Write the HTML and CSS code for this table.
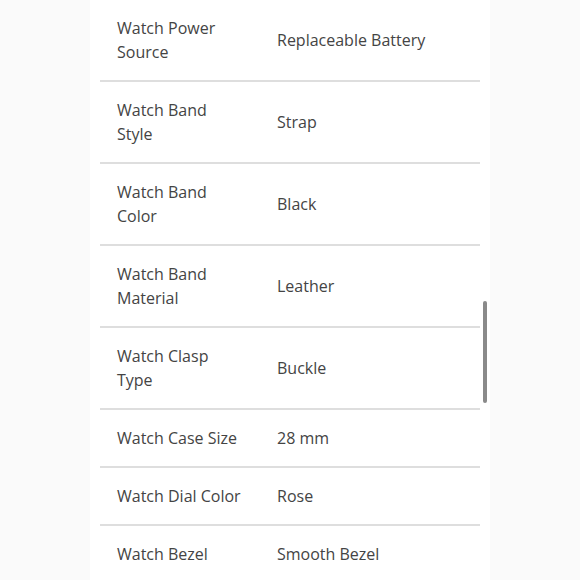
FILE: index.html
```html
<!DOCTYPE html>
<html>
<head>
<meta charset="utf-8">
<link rel="stylesheet" href="styles.css">
</head>
<body>
<div class="panel">
  <div class="specs">
    <div class="row"><div class="label">Watch Power Source</div><div class="value">Replaceable Battery</div></div>
    <div class="row"><div class="label">Watch Band Style</div><div class="value">Strap</div></div>
    <div class="row"><div class="label">Watch Band Color</div><div class="value">Black</div></div>
    <div class="row"><div class="label">Watch Band Material</div><div class="value">Leather</div></div>
    <div class="row"><div class="label">Watch Clasp Type</div><div class="value">Buckle</div></div>
    <div class="row"><div class="label">Watch Case Size</div><div class="value">28 mm</div></div>
    <div class="row"><div class="label">Watch Dial Color</div><div class="value">Rose</div></div>
    <div class="row"><div class="label">Watch Bezel</div><div class="value">Smooth Bezel</div></div>
  </div>
  <div class="scrollbar"></div>
</div>
</body>
</html>
```
FILE: styles.css
```css
html, body {
  margin: 0;
  padding: 0;
  height: 580px;
  overflow: hidden;
  background: #fafafa;
  font-family: "Open Sans", "Liberation Sans", sans-serif;
}
.panel {
  position: relative;
  width: 400px;
  margin-left: 90px;
  height: 580px;
  background: #ffffff;
}
.specs {
  margin-left: 10px;
  width: 380px;
}
.row {
  display: grid;
  grid-template-columns: 160px 1fr;
  align-items: center;
  padding: 16px 0 16px 17px;
  border-bottom: 2px solid #dedede;
  font-size: 16px;
  line-height: 24px;
  color: #444444;
}
.label {
  width: 129px;
}
.scrollbar {
  position: absolute;
  left: 393px;
  top: 301px;
  width: 4px;
  height: 102px;
  border-radius: 2px;
  background: #8a8a8a;
}
```
